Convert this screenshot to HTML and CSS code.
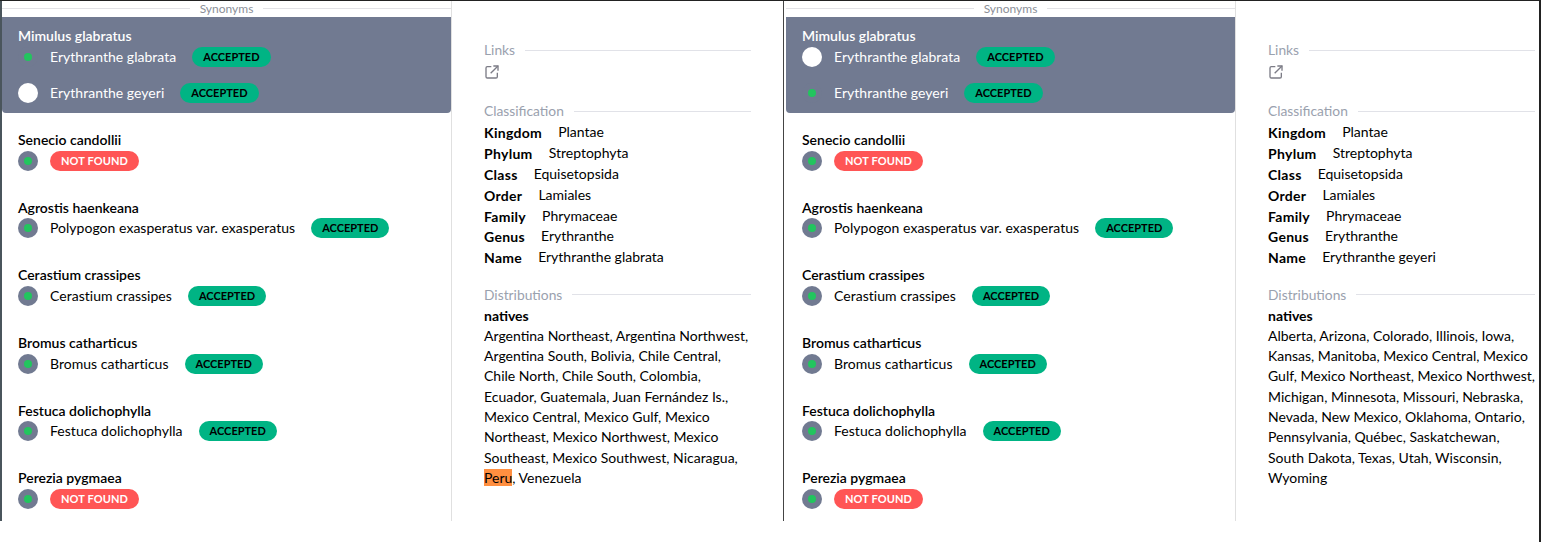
FILE: index.html
```html
<!DOCTYPE html>
<html lang="en">
<head>
    <meta charset="UTF-8">
    <title>Synonyms</title>
    <link rel="stylesheet" href="styles.css">
</head>
<body>
  <div class="window">
    <div class="screen">
        <section class="panel panel-first">
            <div class="list">
                <div class="synonyms-title"><span>Synonyms</span></div>
                <div class="group active">
                    <div class="name">Mimulus glabratus</div>
                    <div class="row"><span class="radio"></span><span class="label">Erythranthe glabrata</span><span class="badge accepted">ACCEPTED</span></div>
                    <div class="row"><span class="radio off"></span><span class="label">Erythranthe geyeri</span><span class="badge accepted">ACCEPTED</span></div>
                </div>
                <div class="group">
                    <div class="name">Senecio candollii</div>
                    <div class="row"><span class="radio"></span><span class="badge missing">NOT FOUND</span></div>
                </div>
                <div class="group">
                    <div class="name">Agrostis haenkeana</div>
                    <div class="row"><span class="radio"></span><span class="label">Polypogon exasperatus var. exasperatus</span><span class="badge accepted">ACCEPTED</span></div>
                </div>
                <div class="group">
                    <div class="name">Cerastium crassipes</div>
                    <div class="row"><span class="radio"></span><span class="label">Cerastium crassipes</span><span class="badge accepted">ACCEPTED</span></div>
                </div>
                <div class="group">
                    <div class="name">Bromus catharticus</div>
                    <div class="row"><span class="radio"></span><span class="label">Bromus catharticus</span><span class="badge accepted">ACCEPTED</span></div>
                </div>
                <div class="group">
                    <div class="name">Festuca dolichophylla</div>
                    <div class="row"><span class="radio"></span><span class="label">Festuca dolichophylla</span><span class="badge accepted">ACCEPTED</span></div>
                </div>
                <div class="group">
                    <div class="name">Perezia pygmaea</div>
                    <div class="row"><span class="radio"></span><span class="badge missing">NOT FOUND</span></div>
                </div>
            </div>
            <div class="detail">
                <div class="heading"><span>Links</span></div>
                <a class="link-icon" href="#"><svg viewBox="0 0 24 24" width="16" height="16" fill="none" stroke="currentColor" stroke-width="2"><path d="M11 4H5a2 2 0 0 0-2 2v13a2 2 0 0 0 2 2h13a2 2 0 0 0 2-2v-6"/><path d="M14 3h7v7"/><path d="M21 3L10 14"/></svg></a>
                <div class="heading heading-class"><span>Classification</span></div>
                <div class="facts">
                    <div><b>Kingdom</b><span>Plantae</span></div>
                    <div><b>Phylum</b><span>Streptophyta</span></div>
                    <div><b>Class</b><span>Equisetopsida</span></div>
                    <div><b>Order</b><span>Lamiales</span></div>
                    <div><b>Family</b><span>Phrymaceae</span></div>
                    <div><b>Genus</b><span>Erythranthe</span></div>
                    <div><b>Name</b><span>Erythranthe glabrata</span></div>
                </div>
                <div class="heading heading-dist"><span>Distributions</span></div>
                <div class="natives">natives</div>
                <p class="places">Argentina Northeast, Argentina Northwest,<br>Argentina South, Bolivia, Chile Central,<br>Chile North, Chile South, Colombia,<br>Ecuador, Guatemala, Juan Fernández Is.,<br>Mexico Central, Mexico Gulf, Mexico<br>Northeast, Mexico Northwest, Mexico<br>Southeast, Mexico Southwest, Nicaragua,<br><mark>Peru</mark>, Venezuela</p>
            </div>
        </section>
        <section class="panel panel-second">
            <div class="list">
                <div class="synonyms-title"><span>Synonyms</span></div>
                <div class="group active">
                    <div class="name">Mimulus glabratus</div>
                    <div class="row"><span class="radio off"></span><span class="label">Erythranthe glabrata</span><span class="badge accepted">ACCEPTED</span></div>
                    <div class="row"><span class="radio"></span><span class="label">Erythranthe geyeri</span><span class="badge accepted">ACCEPTED</span></div>
                </div>
                <div class="group">
                    <div class="name">Senecio candollii</div>
                    <div class="row"><span class="radio"></span><span class="badge missing">NOT FOUND</span></div>
                </div>
                <div class="group">
                    <div class="name">Agrostis haenkeana</div>
                    <div class="row"><span class="radio"></span><span class="label">Polypogon exasperatus var. exasperatus</span><span class="badge accepted">ACCEPTED</span></div>
                </div>
                <div class="group">
                    <div class="name">Cerastium crassipes</div>
                    <div class="row"><span class="radio"></span><span class="label">Cerastium crassipes</span><span class="badge accepted">ACCEPTED</span></div>
                </div>
                <div class="group">
                    <div class="name">Bromus catharticus</div>
                    <div class="row"><span class="radio"></span><span class="label">Bromus catharticus</span><span class="badge accepted">ACCEPTED</span></div>
                </div>
                <div class="group">
                    <div class="name">Festuca dolichophylla</div>
                    <div class="row"><span class="radio"></span><span class="label">Festuca dolichophylla</span><span class="badge accepted">ACCEPTED</span></div>
                </div>
                <div class="group">
                    <div class="name">Perezia pygmaea</div>
                    <div class="row"><span class="radio"></span><span class="badge missing">NOT FOUND</span></div>
                </div>
            </div>
            <div class="detail">
                <div class="heading"><span>Links</span></div>
                <a class="link-icon" href="#"><svg viewBox="0 0 24 24" width="16" height="16" fill="none" stroke="currentColor" stroke-width="2"><path d="M11 4H5a2 2 0 0 0-2 2v13a2 2 0 0 0 2 2h13a2 2 0 0 0 2-2v-6"/><path d="M14 3h7v7"/><path d="M21 3L10 14"/></svg></a>
                <div class="heading heading-class"><span>Classification</span></div>
                <div class="facts">
                    <div><b>Kingdom</b><span>Plantae</span></div>
                    <div><b>Phylum</b><span>Streptophyta</span></div>
                    <div><b>Class</b><span>Equisetopsida</span></div>
                    <div><b>Order</b><span>Lamiales</span></div>
                    <div><b>Family</b><span>Phrymaceae</span></div>
                    <div><b>Genus</b><span>Erythranthe</span></div>
                    <div><b>Name</b><span>Erythranthe geyeri</span></div>
                </div>
                <div class="heading heading-dist"><span>Distributions</span></div>
                <div class="natives">natives</div>
                <p class="places">Alberta, Arizona, Colorado, Illinois, Iowa,<br>Kansas, Manitoba, Mexico Central, Mexico<br>Gulf, Mexico Northeast, Mexico Northwest,<br>Michigan, Minnesota, Missouri, Nebraska,<br>Nevada, New Mexico, Oklahoma, Ontario,<br>Pennsylvania, Québec, Saskatchewan,<br>South Dakota, Texas, Utah, Wisconsin,<br>Wyoming</p>
            </div>
        </section>
    </div>
  </div>
</body>
</html>
```

FILE: styles.css
```css
body {
    font-family: Lato, "Noto Sans", sans-serif;
    font-size: 14px;
    color: #000;
    background-color: #fff;
    margin: 0;
}

.window {
    width: 1541px;
    height: 542px;
    box-sizing: border-box;
    border-right: 2px solid #222;
}

.screen {
    display: flex;
    height: 521px;
    border-top: 1px solid #222;
    box-sizing: border-box;
}

.panel {
    display: flex;
    box-sizing: border-box;
    overflow: hidden;
}

.panel-first {
    width: 783px;
    border-left: 2px solid #4a555c;
}

.panel-second {
    width: 756px;
    border-left: 1px solid #444;
    padding-left: 2px;
}

.list {
    width: 450px;
    box-sizing: border-box;
    flex-shrink: 0;
    border-right: 1px solid #e0e0e0;
}

.synonyms-title {
    display: flex;
    align-items: center;
    gap: 10px;
    height: 15.6px;
    font-size: 12px;
    color: #8b8f98;
}

.synonyms-title::before,
.synonyms-title::after {
    content: "";
    flex: 1;
    height: 1px;
    background-color: #e2e2e6;
}

.group {
    padding: 10px 16px;
    margin-bottom: 7px;
}

.group.active {
    background-color: #717a91;
    color: #fff;
    border-radius: 0 0 4px 4px;
    padding-top: 9.7px;
    padding-bottom: 10.3px;
}

.name {
    font-weight: 600;
    line-height: 20.6px;
}

.row {
    display: flex;
    align-items: center;
    gap: 16px;
    height: 20px;
}

.row + .row {
    margin-top: 16px;
}

.label {
    padding-bottom: 1px;
    letter-spacing: 0.03px;
}

.radio {
    width: 20px;
    height: 20px;
    border-radius: 50%;
    margin-right: -4px;
    background-color: #717a91;
    display: flex;
    align-items: center;
    justify-content: center;
    flex-shrink: 0;
}

.radio::after {
    content: "";
    width: 8px;
    height: 8px;
    border-radius: 50%;
    background-color: #22c55e;
}

.radio.off {
    background-color: #fff;
}

.radio.off::after {
    display: none;
}

.badge {
    height: 20px;
    line-height: 20px;
    padding: 0 11px;
    border-radius: 10px;
    font-size: 11px;
    font-weight: 700;
}

.accepted {
    background-color: #00b484;
    color: #000;
}

.missing {
    background-color: #ff5555;
    color: #fff;
    letter-spacing: 0.1px;
}

.detail {
    flex: none;
    width: 331px;
    box-sizing: border-box;
    padding: 0 32px;
}

.heading {
    display: flex;
    align-items: center;
    gap: 10px;
    font-size: 13.8px;
    color: #9aa1ae;
    line-height: 20px;
}

.heading::after {
    content: "";
    flex: 1;
    height: 1px;
    background-color: #e1e2e8;
}

.detail > .heading:first-child {
    margin-top: 39px;
}

.link-icon {
    display: block;
    color: #7c7c86;
    height: 16px;
    margin-top: 4px;
}

.heading-class {
    margin-top: 21px;
}

.facts {
    margin-top: 2.4px;
}

.facts div {
    display: flex;
    gap: 16px;
    line-height: 20.8px;
}

.facts b {
    letter-spacing: 0.3px;
}

.facts span {
    margin-top: -1px;
}

.heading-dist {
    margin-top: 15.6px;
}

.natives {
    font-weight: 700;
    line-height: 20px;
    margin-top: 1px;
}

.places {
    margin: 0.3px 0 0;
    line-height: 20.3px;
    white-space: nowrap;
}

mark {
    background-color: #ff8f40;
    color: inherit;
}
```
